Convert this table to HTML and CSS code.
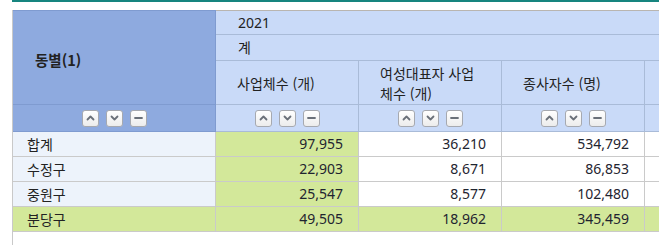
FILE: index.html
```html
<!DOCTYPE html>
<html lang="ko">
<head>
<meta charset="utf-8">
<link rel="stylesheet" href="styles.css">
</head>
<body>
<div class="topline"></div>
<div class="frame">
  <table class="grid">
    <colgroup>
      <col class="c-label"><col class="c-num"><col class="c-num"><col class="c-num"><col class="c-num">
    </colgroup>
    <thead>
      <tr class="h1">
        <th class="dim" rowspan="3"><span class="dimtext">동별(1)</span></th>
        <th class="hd left" colspan="4">2021</th>
      </tr>
      <tr class="h2">
        <th class="hd left" colspan="4">계</th>
      </tr>
      <tr class="h3">
        <th class="hd item"><span class="wrap">사업체수 (개)</span></th>
        <th class="hd item"><span class="wrap">여성대표자 사업체수 (개)</span></th>
        <th class="hd item"><span class="wrap">종사자수 (명)</span></th>
        <th class="hd item"></th>
      </tr>
      <tr class="h4">
        <th class="dim ctrl"><div class="btns"><span class="btn"><svg viewBox="0 0 9 6" width="9" height="6"><path d="M1.5 4.5 L4.5 1.5 L7.5 4.5" /></svg></span><span class="btn"><svg viewBox="0 0 9 6" width="9" height="6"><path d="M1.5 1.5 L4.5 4.5 L7.5 1.5" /></svg></span><span class="btn"><svg viewBox="0 0 9 6" width="9" height="6"><path d="M1 3 L8 3" /></svg></span></div></th>
        <th class="hd ctrl"><div class="btns"><span class="btn"><svg viewBox="0 0 9 6" width="9" height="6"><path d="M1.5 4.5 L4.5 1.5 L7.5 4.5" /></svg></span><span class="btn"><svg viewBox="0 0 9 6" width="9" height="6"><path d="M1.5 1.5 L4.5 4.5 L7.5 1.5" /></svg></span><span class="btn"><svg viewBox="0 0 9 6" width="9" height="6"><path d="M1 3 L8 3" /></svg></span></div></th>
        <th class="hd ctrl"><div class="btns"><span class="btn"><svg viewBox="0 0 9 6" width="9" height="6"><path d="M1.5 4.5 L4.5 1.5 L7.5 4.5" /></svg></span><span class="btn"><svg viewBox="0 0 9 6" width="9" height="6"><path d="M1.5 1.5 L4.5 4.5 L7.5 1.5" /></svg></span><span class="btn"><svg viewBox="0 0 9 6" width="9" height="6"><path d="M1 3 L8 3" /></svg></span></div></th>
        <th class="hd ctrl"><div class="btns"><span class="btn"><svg viewBox="0 0 9 6" width="9" height="6"><path d="M1.5 4.5 L4.5 1.5 L7.5 4.5" /></svg></span><span class="btn"><svg viewBox="0 0 9 6" width="9" height="6"><path d="M1.5 1.5 L4.5 4.5 L7.5 1.5" /></svg></span><span class="btn"><svg viewBox="0 0 9 6" width="9" height="6"><path d="M1 3 L8 3" /></svg></span></div></th>
        <th class="hd ctrl"></th>
      </tr>
    </thead>
    <tbody>
      <tr>
        <td class="lbl">합계</td><td class="num green">97,955</td><td class="num">36,210</td><td class="num">534,792</td><td class="num"></td>
      </tr>
      <tr>
        <td class="lbl">수정구</td><td class="num green">22,903</td><td class="num">8,671</td><td class="num">86,853</td><td class="num"></td>
      </tr>
      <tr>
        <td class="lbl">중원구</td><td class="num green">25,547</td><td class="num">8,577</td><td class="num">102,480</td><td class="num"></td>
      </tr>
      <tr class="hl">
        <td class="lbl">분당구</td><td class="num">49,505</td><td class="num">18,962</td><td class="num">345,459</td><td class="num"></td>
      </tr>
    </tbody>
  </table>
</div>
</body>
</html>
```
FILE: styles.css
```css
html, body {
  margin: 0;
  padding: 0;
  background: #ffffff;
  overflow: hidden;
}
body {
  width: 659px;
  height: 245px;
  font-family: "Noto Sans", "Noto Sans CJK KR", sans-serif;
  font-size: 14px;
  color: #222;
}
.topline {
  margin-left: 12px;
  height: 2px;
  background: #17857f;
}
.frame {
  margin-top: 8px;
  margin-left: 12px;
  height: 235px;
  border-left: 1px solid #c9c9c9;
  overflow: hidden;
}
.grid {
  border-collapse: collapse;
  table-layout: fixed;
  width: 773px;
  margin-left: -1px;
}
.c-label { width: 203px; }
.c-num { width: 143px; }
.grid th, .grid td {
  padding: 0;
  font-weight: normal;
  line-height: 18px;
  white-space: nowrap;
}
.grid th {
  border: 1px solid #a9bbd8;
}
.grid thead tr.h1 th { border-top: 1px solid #b9b5b0; }
.dim {
  background: #8eaadf;
  border-color: #7f9bd0 !important;
  text-align: left;
  vertical-align: middle;
}
.grid thead tr.h1 th.dim { border-left: 1px solid #b9b5b0; border-top: 1px solid #b9b5b0; }
.dimtext {
  display: block;
  padding: 5px 0 0 22px;
  font-weight: bold;
  font-size: 14.5px;
  font-family: "Noto Sans CJK KR", "Noto Sans", sans-serif;
}
.hd {
  background: #c9daf8;
}
.left {
  text-align: left;
  padding-left: 22px !important;
}
.h1 th { height: 23px; }
.h2 th { height: 25px; }
.h3 th { height: 43px; }
.h4 th { height: 26px; }
.item {
  text-align: left;
  vertical-align: middle;
}
.wrap {
  display: block;
  white-space: normal;
  padding: 0 16px 0 21px;
  line-height: 20px;
  word-break: break-all;
  font-family: "Noto Sans CJK KR", "Noto Sans", sans-serif;
}
.ctrl { vertical-align: middle; }
.btns {
  display: flex;
  justify-content: center;
  gap: 7px;
}
.btn {
  width: 15px;
  height: 15px;
  border: 1px solid #a6a9b0;
  border-radius: 3px;
  background: linear-gradient(#ffffff, #ececec);
  display: flex;
  align-items: center;
  justify-content: center;
}
.btn svg path {
  fill: none;
  stroke: #6a7079;
  stroke-width: 1.8;
  stroke-linecap: round;
  stroke-linejoin: round;
}
.grid td {
  border: 1px solid #cacaca;
  height: 24px;
  background: #ffffff;
}
.lbl {
  background: #edf3fb !important;
  padding-left: 14px !important;
  text-align: left;
  color: #222;
  font-family: "Noto Sans CJK KR", "Noto Sans", sans-serif;
}
.num {
  text-align: right;
  padding-right: 15px !important;
  color: #1f2430;
}
.green { background: #d3e89a !important; }
.hl td { background: #d3e89a !important; }
```
